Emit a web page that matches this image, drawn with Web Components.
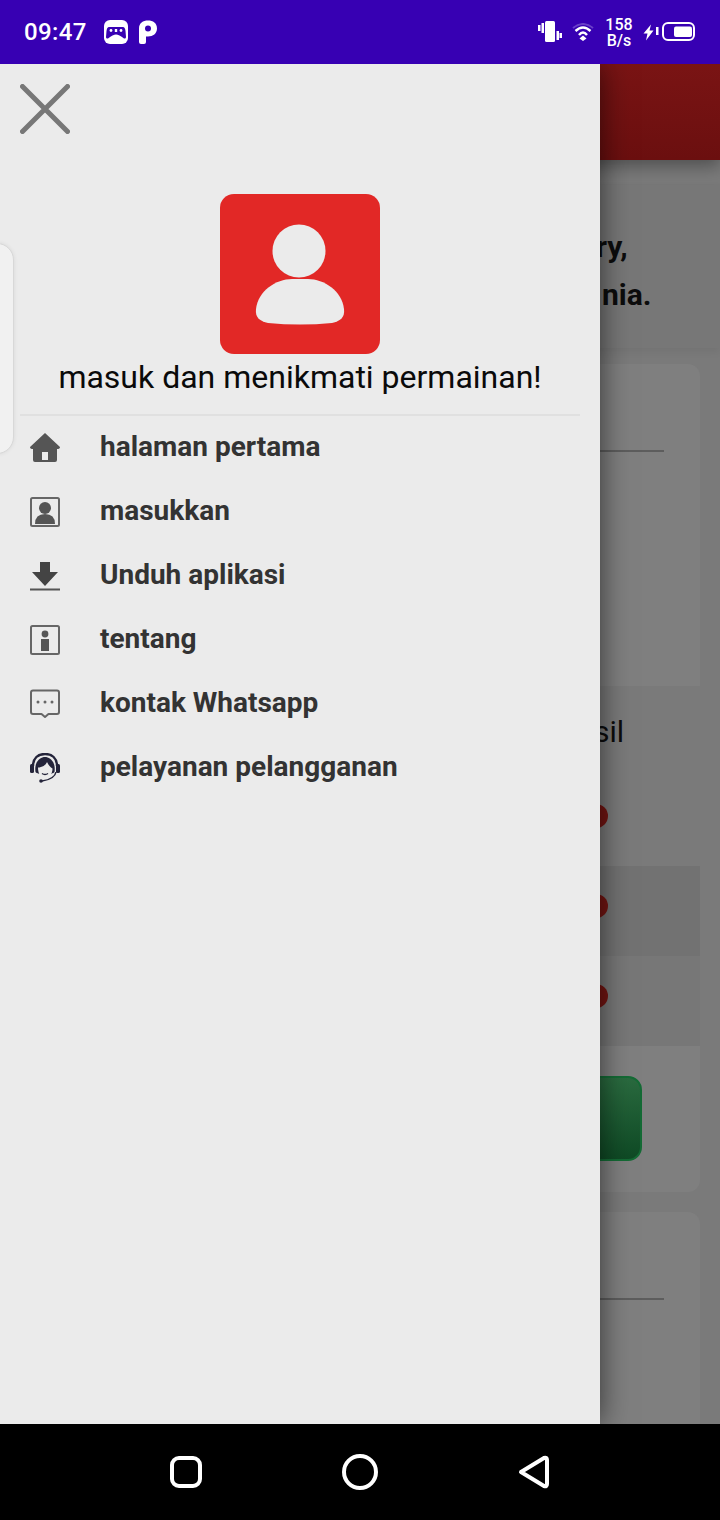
<!DOCTYPE html>
<html>
<head>
<meta charset="utf-8">
<style>
    html, body { margin: 0; padding: 0; background: #000; }
    body { width: 720px; height: 1520px; overflow: hidden; font-family: Roboto, "Liberation Sans", sans-serif; }
    app-shell { display: flex; }
</style>
</head>
<body>
<app-shell>
    <status-bar slot="status"></status-bar>
    <back-page slot="page"></back-page>
    <side-drawer slot="drawer">
        <drawer-item label="halaman pertama">
            <svg viewBox="0 0 30 30"><path fill="#555" d="M15 0 L30 14 Q30 16 27 16 L27 27 Q27 29 25 29 L5 29 Q3 29 3 27 L3 16 Q0 16 0 14 Z"/><rect x="12" y="19" width="6" height="8" fill="#ebebeb"/></svg>
        </drawer-item>
        <drawer-item label="masukkan">
            <svg viewBox="0 0 30 30"><rect x="1" y="1" width="28" height="28" rx="1.500" fill="none" stroke="#666" stroke-width="2"/><circle cx="15" cy="11" r="6" fill="#555"/><path fill="#555" d="M5 27 Q5 17 15 17 Q25 17 25 27 Z"/></svg>
        </drawer-item>
        <drawer-item label="Unduh aplikasi">
            <svg viewBox="0 0 30 30"><path fill="#444" d="M10 1 L20 1 L20 11 L28 11 L15 25 L2 11 L10 11 Z"/><rect y="27.500" width="30" height="2" fill="#555"/></svg>
        </drawer-item>
        <drawer-item label="tentang">
            <svg viewBox="0 0 30 30"><rect x="1" y="1" width="28" height="28" rx="1.500" fill="none" stroke="#666" stroke-width="2"/><circle cx="15" cy="9" r="3.400" fill="#555"/><rect x="11" y="14" width="8" height="12" fill="#555"/></svg>
        </drawer-item>
        <drawer-item label="kontak Whatsapp">
            <svg viewBox="0 0 30 30"><path fill="none" stroke="#666" stroke-width="2" stroke-linejoin="round" d="M3 1.500 L27 1.500 Q29 1.500 29 3.500 L29 23 Q29 25 27 25 L18.500 25 L15 28 L11.500 25 L3 25 Q1 25 1 23 L1 3.500 Q1 1.500 3 1.500 Z"/><circle cx="8" cy="13" r="1.500" fill="#666"/><circle cx="15" cy="13" r="1.500" fill="#666"/><circle cx="22" cy="13" r="1.500" fill="#666"/></svg>
        </drawer-item>
        <drawer-item label="pelayanan pelangganan">
            <svg viewBox="0 0 30 30">
                <path fill="none" stroke="#24243a" stroke-width="2.400" d="M3 13 C3 5 8 1 15 1 C22 1 27 5 27 13"/>
                <rect x="0" y="11" width="4" height="9" rx="1.500" fill="#24243a"/>
                <rect x="26" y="11" width="4" height="9" rx="1.500" fill="#24243a"/>
                <path fill="#24243a" d="M5.500 19 C4 9 10 4 15 4 C20 4 26 9 24.500 19 C23 22 7 22 5.500 19 Z"/>
                <path fill="#ebebeb" d="M8 14.500 C12 14.500 16 12 17 9 C18.500 12 20.500 14.500 22.500 15.500 C22.500 21 19 25.500 15 25.500 C11 25.500 8 21 8 14.500 Z"/>
                <path fill="none" stroke="#24243a" stroke-width="1.500" d="M12 20.500 Q15 22.500 18 20.500"/>
                <path fill="none" stroke="#24243a" stroke-width="1.500" d="M26 19 C25 25 19 27 12 28"/>
                <circle cx="11" cy="28" r="1.800" fill="#24243a"/>
            </svg>
        </drawer-item>
    </side-drawer>
    <nav-bar slot="nav"></nav-bar>
</app-shell>

<script>
// 外壳
customElements.define("app-shell", class extends HTMLElement {
    constructor() {
        super();
        this.attachShadow({ mode: "open" });
        this.shadowRoot.innerHTML = /*html*/ `
        <style>
            :host { display: flex; flex-direction: column; width: 720px; height: 1520px; }
            .middle { position: relative; flex: 1; min-height: 0; overflow: hidden; }
        </style>
        <slot name="status"></slot>
        <div class="middle">
            <slot name="page"></slot>
            <slot name="drawer"></slot>
        </div>
        <slot name="nav"></slot>`;
    }
});

// 状态栏
customElements.define("status-bar", class extends HTMLElement {
    constructor() {
        super();
        this.attachShadow({ mode: "open" });
        this.shadowRoot.innerHTML = /*html*/ `
        <style>
            :host { display: flex; align-items: center; height: 64px; background: #3700b3; color: #fff; padding: 0 25px 0 24px; box-sizing: border-box; font-family: Roboto, sans-serif; }
            .time { font-size: 24px; font-weight: 500; letter-spacing: .4px; width: 69px; }
            .left { display: flex; align-items: center; gap: 11px; flex: 1; }
            .right { display: flex; align-items: center; }
            svg { display: block; }
            .speed { font-size: 16px; font-weight: 500; line-height: 16px; text-align: center; width: 28px; margin: 1px 10px 0 11px; }
        </style>
        <div class="left">
            <span class="time">09:47</span>
            <svg width="24" height="24" viewBox="0 0 24 24"><rect width="24" height="24" rx="6" fill="#fff"/><path fill="#3700b3" d="M5 7 L19 7 Q21 7 21.500 11 L22 17 Q22 19 20 18.500 Q15 14.500 12 14.500 Q9 14.500 4 18.500 Q2 19 2 17 L2.500 11 Q3 7 5 7 Z"/><circle cx="7" cy="10.500" r="1.400" fill="#fff"/><rect x="10.800" y="9" width="2.400" height="3" fill="#fff"/><circle cx="17" cy="10.500" r="1.400" fill="#fff"/></svg>
            <svg width="18" height="24" viewBox="0 0 18 24"><path fill="#fff" d="M0 8.500 C0 3 4 0.500 9 0.500 C14 0.500 18 3 18 8.500 C18 13.500 14 16.500 9 16.500 L7 16.500 L7 22 Q7 24 5 24 L2 24 Q0 24 0 22 Z M9 5.500 A3 3 0 1 0 9 11.500 A3 3 0 1 0 9 5.500 Z"/></svg>
        </div>
        <div class="right">
            <svg width="24" height="24" viewBox="0 0 24 24" fill="#fff"><rect x="7" y="1" width="10" height="21" rx="1.500"/><rect x="3.500" y="3" width="2.500" height="10"/><rect x="0" y="5" width="2.500" height="6"/><rect x="18.500" y="11" width="2.500" height="9"/><rect x="21.500" y="13" width="2.500" height="5"/></svg>
            <svg style="margin-left:10px" width="22" height="18" viewBox="0 0 22 18"><path fill="none" stroke="#6a3fc8" stroke-width="2" d="M1 5 Q11 -3 21 5"/><path fill="none" stroke="#fff" stroke-width="2.400" d="M3.500 8 Q11 1 18.500 8 M7 12 Q11 7 15 12"/><path fill="#fff" d="M11 12.500 L14.500 15.500 L11 18 L7.500 15.500 Z"/></svg>
            <div class="speed">158<br>B/s</div>
            <svg width="11" height="20" viewBox="0 0 11 20"><path fill="#fff" d="M8 2.500 L0.500 11.500 L4.500 11.500 L3 18.500 L10.500 8.500 L6.500 8.500 Z"/></svg>
            <svg style="margin-left:2px" width="39" height="20" viewBox="0 0 39 20"><rect x="0" y="5" width="2.500" height="8" fill="#fff"/><rect x="7" y="1" width="31" height="17" rx="5" fill="none" stroke="#fff" stroke-width="2"/><rect x="18" y="4.500" width="18" height="10.500" rx="2" fill="#fff"/></svg>
        </div>`;
    }
});

// 遮罩下的页面
customElements.define("back-page", class extends HTMLElement {
    constructor() {
        super();
        this.attachShadow({ mode: "open" });
        this.shadowRoot.innerHTML = /*html*/ `
        <style>
            :host { display: flex; flex-direction: column; height: 1360px; background: #7a7a7a; color: #0c0c0c; font-family: Roboto, sans-serif; overflow: hidden; }
            .header { height: 96px; flex: none; background: linear-gradient(#7a1414, #6b0f0f); box-shadow: 0 6px 16px rgba(0,0,0,.35); position: relative; }
            .notice { flex: none; height: 164px; margin: 24px 0 16px; background: #777; box-shadow: 0 4px 8px rgba(0,0,0,.06); padding-top: 39px; box-sizing: border-box; font-size: 30px; font-weight: 700; line-height: 48px; }
            .notice div:first-child { padding-left: 596px; }
            .notice div:last-child { padding-left: 602px; }
            .card { flex: none; width: 700px; background: #7f7f7f; border-radius: 12px; box-sizing: border-box; }
            .card.one { height: 828px; margin-bottom: 20px; display: flex; flex-direction: column; }
            .card.two { height: 300px; border-radius: 12px 12px 0 0; }
            .rule { height: 2px; width: 664px; background: #5d5d5d; flex: none; }
            .one .rule { margin-top: 86px; }
            .two .rule { margin-top: 86px; }
            .sil { flex: none; height: 90px; margin-top: 234px; background: #7a7a7a; font-size: 30px; line-height: 91px; padding-left: 594px; box-sizing: border-box; }
            .row { flex: none; height: 90px; background: #777; display: flex; align-items: center; }
            .row.first { background: #7a7a7a; }
            .row.dark { background: #727272; }
            .dot { width: 24px; height: 24px; border-radius: 50%; background: #731512; margin: -10px 0 0 584px; }
            .foot { flex: 1; padding-top: 30px; box-sizing: border-box; }
            .button { width: 642px; height: 85px; box-sizing: border-box; border-radius: 14px; background: linear-gradient(#2a6a3f, #0f4a25); border: 2px solid #146b35; }
        </style>
        <div class="header"></div>
        <div class="notice"><div>ry,</div><div>nia.</div></div>
        <div class="card one">
            <div class="rule"></div>
            <div class="sil">sil</div>
            <div class="row first"><div class="dot"></div></div>
            <div class="row dark"><div class="dot"></div></div>
            <div class="row"><div class="dot"></div></div>
            <div class="foot"><div class="button"></div></div>
        </div>
        <div class="card two">
            <div class="rule"></div>
        </div>`;
    }
});

// 抽屉
customElements.define("side-drawer", class extends HTMLElement {
    constructor() {
        super();
        this.attachShadow({ mode: "open" });
        this.shadowRoot.innerHTML = /*html*/ `
        <style>
            :host { position: absolute; left: 0; top: 0; bottom: 0; width: 600px; background: #ebebeb; box-shadow: 0 0 28px rgba(0,0,0,.6); display: flex; flex-direction: column; font-family: Roboto, sans-serif; }
            .close { height: 130px; flex: none; padding: 20px 0 0 20px; box-sizing: border-box; }
            svg { display: block; }
            .avatar { width: 160px; height: 160px; margin-left: 220px; border-radius: 14px; background: #e22826; flex: none; }
            .hint { text-align: center; font-size: 32px; line-height: 46px; color: #0a0a0a; white-space: nowrap; flex: none; }
            .line { height: 2px; background: #e0e0e0; margin: 14px 20px 0; flex: none; }
            .list { display: flex; flex-direction: column; margin-top: -2px; }
            .peek { position: absolute; left: -20px; top: 179px; width: 34px; height: 211px; background: #f1f1f1; border: 1px solid #d8d8d8; border-radius: 22px; box-sizing: border-box; box-shadow: 0 0 4px rgba(0,0,0,.08); }
        </style>
        <div class="close">
            <svg width="50" height="50" viewBox="0 0 50 50"><path d="M2.500 2.500 L47.500 47.500 M47.500 2.500 L2.500 47.500" stroke="#777" stroke-width="5" stroke-linecap="round"/></svg>
        </div>
        <div class="avatar">
            <svg width="160" height="160" viewBox="0 0 160 160" fill="#ebebeb"><circle cx="79" cy="57" r="26.500"/><path d="M36 115 C38 97 56 85 72 85 L88 85 C104 85 122 97 124 115 C125 124 120 127 112 129 Q80 132 48 129 C40 127 35 124 36 115 Z"/></svg>
        </div>
        <div class="hint">masuk dan menikmati permainan!</div>
        <div class="line"></div>
        <div class="list"><slot></slot></div>
        <div class="peek"></div>`;
    }
});

// 菜单项
customElements.define("drawer-item", class extends HTMLElement {
    constructor() {
        super();
        this.attachShadow({ mode: "open" });
        this.shadowRoot.innerHTML = /*html*/ `
        <style>
            :host { display: flex; align-items: center; height: 64px; padding-left: 30px; font-family: Roboto, sans-serif; }
            .icon { width: 30px; height: 30px; flex: none; margin: 4px 40px 0 0; }
            ::slotted(svg) { display: block; width: 30px; height: 30px; }
            .label { font-size: 28px; font-weight: 700; color: #333; white-space: nowrap; }
        </style>
        <div class="icon"><slot></slot></div>
        <span class="label"></span>`;
        this.shadowRoot.querySelector(".label").textContent = this.getAttribute("label");
    }
});

// 导航条
customElements.define("nav-bar", class extends HTMLElement {
    constructor() {
        super();
        this.attachShadow({ mode: "open" });
        this.shadowRoot.innerHTML = /*html*/ `
        <style>
            :host { display: flex; gap: 140px; align-items: center; height: 96px; background: #000; padding-left: 170px; box-sizing: border-box; flex: none; }
            svg { display: block; fill: none; stroke: #fff; stroke-width: 4; }
        </style>
        <svg width="32" height="32" viewBox="0 0 32 32"><rect x="2" y="2" width="28" height="28" rx="7"/></svg>
        <svg width="36" height="36" viewBox="0 0 36 36"><circle cx="18" cy="18" r="16"/></svg>
        <svg width="32" height="34" viewBox="0 0 32 34" stroke-linejoin="round"><path d="M3 17 L26 3 Q29 2 29 5 L29 29 Q29 32 26 31 Z"/></svg>`;
    }
});
</script>
</body>
</html>
